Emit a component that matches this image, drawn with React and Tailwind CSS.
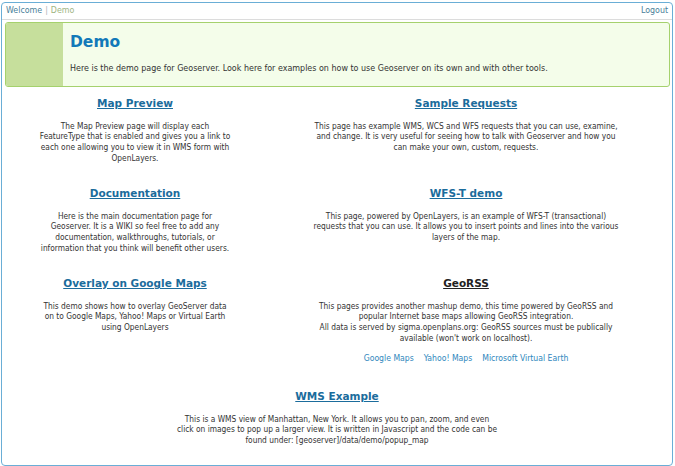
import React from "react";

const body = { fontFamily: '"DejaVu Sans Condensed", "DejaVu Sans", sans-serif' };
const bold = { fontFamily: '"DejaVu Sans", sans-serif' };

function Cell({ title, lines, dark, children, h }) {
  return (
    <div className={`flex flex-col items-center ${h}`}>
      <a
        href="#"
        style={bold}
        className={`text-[10.5px] leading-[14px] font-bold underline ${dark ? "text-[#222]" : "text-[#1b6c9c]"}`}
      >
        {title}
      </a>
      <div style={body} className="mt-[10.5px] text-[8.3px] leading-[10.7px] text-[#333] text-center">
        {lines.map((l, i) => (
          <div key={i} className="whitespace-nowrap">{l}</div>
        ))}
      </div>
      {children}
    </div>
  );
}

export default function App() {
  return (
    <div className="w-[675px] h-[466px] bg-white overflow-hidden pt-[2px] pl-[1px]">
      <div className="w-[672px] h-[464px] border border-[#6aaed6] rounded-[4px] bg-white overflow-hidden">
        {/* header */}
        <div style={body} className="h-[17px] border-b border-[#dcdcdc] flex items-center justify-between px-[4px] text-[8.8px]">
          <div>
            <span className="text-[#4a8099]">Welcome</span>
            <span className="text-[#aab4b8] mx-[3px]">|</span>
            <span className="text-[#a0b582]">Demo</span>
          </div>
          <span className="text-[#4a8099]">Logout</span>
        </div>
        {/* green box */}
        <div className="mt-[2px] ml-[3px] mr-[2px] h-[65px] border border-[#a5d16d] rounded-[3px] bg-[#f4fdea] flex overflow-hidden">
          <div className="w-[57px] bg-[#c6df9c]" />
          <div className="pl-[7px] pt-[9px]">
            <div style={bold} className="text-[15.5px] leading-[20px] font-bold text-[#1279b9]">Demo</div>
            <div style={body} className="mt-[10px] text-[8.9px] leading-[12px] text-[#333] whitespace-nowrap">
              Here is the demo page for Geoserver. Look here for examples on how to use Geoserver on its own and with other tools.
            </div>
          </div>
        </div>
        {/* grid */}
        <div className="mt-[9px] grid grid-cols-[266px_396px]">
          <Cell
            h="h-[90px]"
            title="Map Preview"
            lines={[
              "The Map Preview page will display each",
              "FeatureType that is enabled and gives you a link to",
              "each one allowing you to view it in WMS form with",
              "OpenLayers.",
            ]}
          />
          <Cell
            h="h-[90px]"
            title="Sample Requests"
            lines={[
              "This page has example WMS, WCS and WFS requests that you can use, examine,",
              "and change. It is very useful for seeing how to talk with Geoserver and how you",
              "can make your own, custom, requests.",
            ]}
          />
          <Cell
            h="h-[90px]"
            title="Documentation"
            lines={[
              "Here is the main documentation page for",
              "Geoserver. It is a WIKI so feel free to add any",
              "documentation, walkthroughs, tutorials, or",
              "information that you think will benefit other users.",
            ]}
          />
          <Cell
            h="h-[90px]"
            title="WFS-T demo"
            lines={[
              "This page, powered by OpenLayers, is an example of WFS-T (transactional)",
              "requests that you can use. It allows you to insert points and lines into the various",
              "layers of the map.",
            ]}
          />
          <Cell
            h="h-[113px]"
            title="Overlay on Google Maps"
            lines={[
              "This demo shows how to overlay GeoServer data",
              "on to Google Maps, Yahoo! Maps or Virtual Earth",
              "using OpenLayers",
            ]}
          />
          <Cell
            h="h-[113px]"
            title="GeoRSS"
            dark
            lines={[
              "This pages provides another mashup demo, this time powered by GeoRSS and",
              "popular Internet base maps allowing GeoRSS integration.",
              "All data is served by sigma.openplans.org: GeoRSS sources must be publically",
              "available (won't work on localhost).",
            ]}
          >
            <div style={body} className="mt-[8.5px] flex gap-[10px] text-[8.6px] leading-[12px] text-[#2f87bd]">
              <a href="#">Google Maps</a>
              <a href="#">Yahoo! Maps</a>
              <a href="#">Microsoft Virtual Earth</a>
            </div>
          </Cell>
        </div>
        <div className="w-[670px]">
          <Cell
            title="WMS Example"
            lines={[
              "This is a WMS view of Manhattan, New York. It allows you to pan, zoom, and even",
              "click on images to pop up a larger view. It is written in Javascript and the code can be",
              "found under: [geoserver]/data/demo/popup_map",
            ]}
          />
        </div>
      </div>
    </div>
  );
}
